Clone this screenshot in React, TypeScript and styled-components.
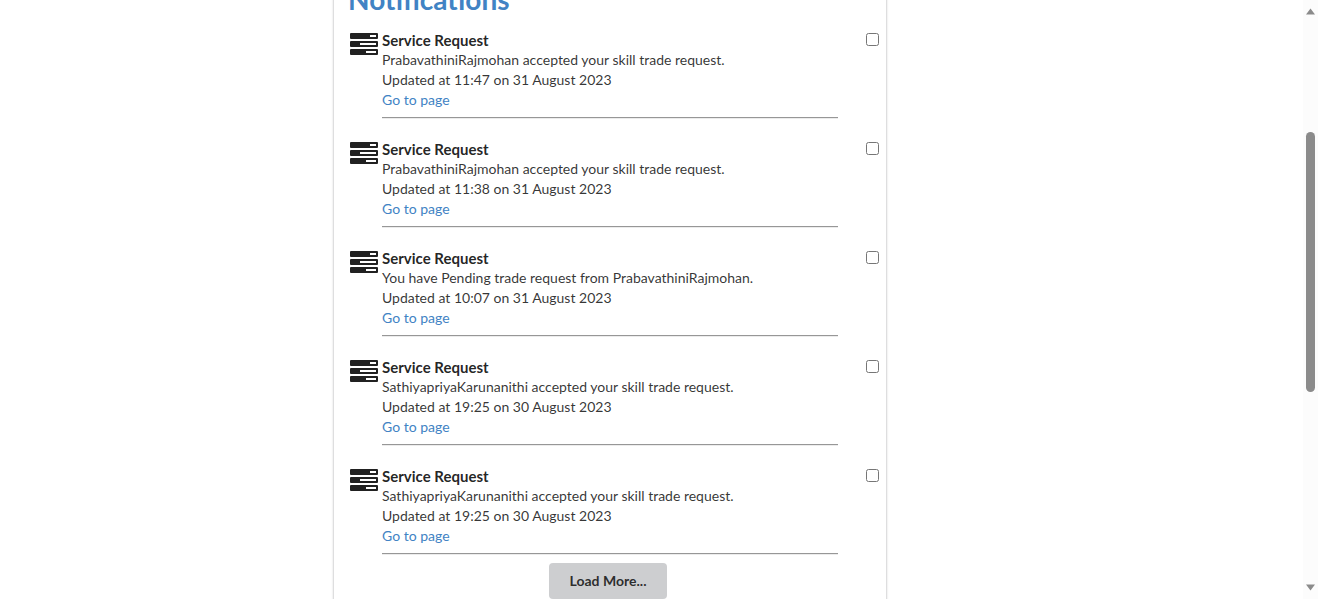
import React from 'react';
import styled, { createGlobalStyle } from 'styled-components';

const GlobalStyle = createGlobalStyle`
  * { box-sizing: border-box; }
  body {
    margin: 0;
    background: #fff;
    color: rgba(0, 0, 0, 0.87);
    font: 14px/20px Lato, "Liberation Sans", sans-serif;
  }
`;

const Page = styled.div`
  display: grid;
  grid-template-columns: minmax(0, 1fr) 15px;
  height: 100vh;
  overflow: hidden;
`;

const Columns = styled.main`
  display: grid;
  grid-template-columns: 333fr minmax(400px, 554fr) 416fr;
  min-height: 0;
  overflow: hidden;
`;

const Card = styled.section`
  grid-column: 2;
  margin-top: -34px;
  padding: 14px 7px 14px 14px;
  border: 1px solid rgba(34, 36, 38, 0.15);
  box-shadow: 0 1px 2px 0 rgba(34, 36, 38, 0.15);
`;

const Heading = styled.h1`
  margin: 0 0 13px;
  color: #4183c4;
  font-size: 28px;
  line-height: 36px;
  font-weight: 700;
`;

const List = styled.ul`
  margin: 0;
  padding: 0 0 0 2px;
  list-style: none;
`;

const Item = styled.li`
  display: grid;
  grid-template-columns: 28px minmax(0, 1fr) 13px;
  column-gap: 4px;
  align-items: start;
  padding-bottom: 21px;

  &:last-child { padding-bottom: 9px; }
`;

const TasksIcon = styled.svg`
  width: 28px;
  height: 22px;
  margin-top: 3px;
`;

const Details = styled.div`
  margin-right: 24px;
  padding-bottom: 7px;
  border-bottom: 1px solid #979797;
  box-shadow: 0 1px 0 #ececec;
`;

const Title = styled.label`
  display: block;
  font-size: 15px;
  font-weight: 700;
`;

const Line = styled.p`
  margin: 0;
  color: rgba(0, 0, 0, 0.8);
`;

const PageLink = styled.a`
  color: #4183c4;
  text-decoration: none;
`;

const Checkbox = styled.input`
  width: 13px;
  height: 13px;
  margin: 3px 0 0;
`;

const Actions = styled.div`
  display: flex;
  justify-content: center;
  padding-right: 11px;
`;

const LoadButton = styled.button`
  padding: 8px 21px;
  border: 0;
  border-radius: 4px;
  background: #cdced0;
  color: rgba(0, 0, 0, 0.8);
  font: 700 14px/20px Lato, "Liberation Sans", sans-serif;
`;

const Scrollbar = styled.div`
  display: flex;
  flex-direction: column;
  align-items: center;
  padding: 8px 0;
  background: #fcfcfc;
`;

const Arrow = styled.svg`
  flex: none;
  width: 9px;
  height: 7px;
`;

const Track = styled.div`
  display: grid;
  grid-template-rows: 117fr 260fr 192fr;
  flex: 1;
`;

const Thumb = styled.div`
  grid-row: 2;
  width: 9px;
  border-radius: 5px;
  background: #8b8b8b;
`;

const notifications = [
  { message: 'PrabavathiniRajmohan accepted your skill trade request.', updated: '11:47 on 31 August 2023' },
  { message: 'PrabavathiniRajmohan accepted your skill trade request.', updated: '11:38 on 31 August 2023' },
  { message: 'You have Pending trade request from PrabavathiniRajmohan.', updated: '10:07 on 31 August 2023' },
  { message: 'SathiyapriyaKarunanithi accepted your skill trade request.', updated: '19:25 on 30 August 2023' },
  { message: 'SathiyapriyaKarunanithi accepted your skill trade request.', updated: '19:25 on 30 August 2023' },
];

export default function App() {
  return (
    <>
      <GlobalStyle />
      <Page>
        <Columns>
          <Card>
            <Heading>Notifications</Heading>
            <List>
              {notifications.map((item, index) => (
                <Item key={index}>
                  <TasksIcon viewBox="0 0 28 22" aria-hidden="true">
                    <g fill="#212121">
                      <rect width="28" height="6" rx="1" />
                      <rect y="8" width="28" height="6" rx="1" />
                      <rect y="16" width="28" height="6" rx="1" />
                    </g>
                    <g fill="#fff">
                      <rect x="20" y="2" width="6" height="2" />
                      <rect x="10" y="10" width="16" height="2" />
                      <rect x="16" y="18" width="10" height="2" />
                    </g>
                  </TasksIcon>
                  <Details>
                    <Title htmlFor={`notification-${index}`}>Service Request</Title>
                    <Line>{item.message}</Line>
                    <Line>Updated at {item.updated}</Line>
                    <PageLink href="#">Go to page</PageLink>
                  </Details>
                  <Checkbox type="checkbox" id={`notification-${index}`} />
                </Item>
              ))}
            </List>
            <Actions>
              <LoadButton type="button">Load More...</LoadButton>
            </Actions>
          </Card>
        </Columns>
        <Scrollbar aria-hidden="true">
          <Arrow viewBox="0 0 9 7"><path d="M4.5 0.5 L9 6.5 H0 Z" fill="#8b8b8b" /></Arrow>
          <Track><Thumb /></Track>
          <Arrow viewBox="0 0 9 7"><path d="M0 0.5 H9 L4.5 6.5 Z" fill="#8b8b8b" /></Arrow>
        </Scrollbar>
      </Page>
    </>
  );
}
